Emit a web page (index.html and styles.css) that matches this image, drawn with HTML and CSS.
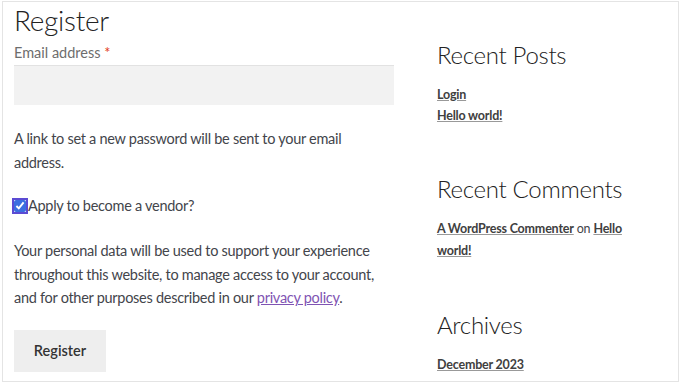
FILE: index.html
```html
<html>
<head>
    <title>Register</title>
    <meta http-equiv="Content-Type" content="text/html; charset=utf-8"/>
    <meta name="viewport" content="width=device-width, initial-scale=1">
    <link rel="stylesheet" href="styles.css">
</head>
<body>
<div class="page">
    <div class="main">
        <h2 class="title">Register</h2>
        <form class="register-form" onsubmit="return false">
            <label class="field-label" for="reg_email">Email address <span class="required">*</span></label>
            <input id="reg_email" class="text-input" type="email">

            <p class="note">A link to set a new password will be sent to your email address.</p>

            <label class="vendor" for="apply_vendor">
                <input id="apply_vendor" type="checkbox" checked>Apply to become a vendor?
            </label>

            <p class="note privacy">Your personal data will be used to support your experience throughout this website, to manage access to your account, and for other purposes described in our <a href="#">privacy policy</a>.</p>

            <button class="button" type="submit">Register</button>
        </form>
    </div>

    <aside class="sidebar">
        <section class="widget">
            <h2 class="widget-title">Recent Posts</h2>
            <ul class="widget-list">
                <li><a href="#">Login</a></li>
                <li><a href="#">Hello world!</a></li>
            </ul>
        </section>
        <section class="widget">
            <h2 class="widget-title">Recent Comments</h2>
            <ul class="widget-list comments">
                <li><a href="#">A WordPress Commenter</a> on <a href="#">Hello world!</a></li>
            </ul>
        </section>
        <section class="widget">
            <h2 class="widget-title">Archives</h2>
            <ul class="widget-list">
                <li><a href="#">December 2023</a></li>
            </ul>
        </section>
    </aside>
</div>
</body>
</html>
```

FILE: styles.css
```css
html {
    font-family: 'Lato', 'Noto Sans', Arial, sans-serif;
    margin: 0;
}

body {
    margin: 0;
    background: white;
}

.page {
    display: flex;
    gap: 43px;
    margin: 1px 1px 2px 2px;
    height: 381px;
    box-sizing: border-box;
    border: 1px solid #e4e4e4;
    padding: 0 11px;
    overflow: hidden;
}

.main {
    width: 380px;
    flex-shrink: 0;
}

.title {
    font-weight: 300;
    font-size: 28px;
    letter-spacing: -0.3px;
    color: #222;
    margin: 1px 0 6px;
    line-height: 34px;
}

.field-label {
    display: block;
    font-size: 14.5px;
    color: #6d6d6d;
    line-height: 20px;
    margin-bottom: 2px;
}

.required {
    color: #e2401c;
}

.text-input {
    display: block;
    width: 100%;
    height: 40px;
    border: 0;
    border-top: 1px solid #e2e2e2;
    background: #f2f2f2;
    box-sizing: border-box;
}

.note {
    font-size: 14.5px;
    letter-spacing: -0.28px;
    line-height: 23.5px;
    color: #43454b;
    margin: 22px 0 0;
}

.note a {
    color: #7f54b3;
}

.vendor {
    display: flex;
    align-items: center;
    font-size: 14.5px;
    letter-spacing: -0.28px;
    color: #43454b;
    margin-top: 22px;
    line-height: 20px;
}

.vendor input {
    width: 12px;
    height: 12px;
    margin: 0 2px 0 0;
    outline: 2px solid #5b4bd3;
    outline-offset: 0;
    accent-color: #3b6fe0;
}

.note.privacy {
    margin-top: 23px;
}

.button {
    display: block;
    margin-top: 20px;
    width: 92px;
    height: 42px;
    border: 0;
    background: #eeeeee;
    font-family: inherit;
    font-size: 14.5px;
    font-weight: 600;
    color: #333;
}

.sidebar {
    width: 195px;
    padding-top: 37px;
}

.widget {
    margin-bottom: 47px;
}

.widget-title {
    font-weight: 300;
    font-size: 24px;
    letter-spacing: -0.3px;
    line-height: 32px;
    color: #222;
    margin: 0 0 13px;
    white-space: nowrap;
}

.widget-list {
    list-style: none;
    margin: 0;
    padding: 0;
    font-size: 12.5px;
    letter-spacing: -0.2px;
    line-height: 21px;
    color: #43454b;
}

.widget-list.comments {
    line-height: 22px;
}

.widget-list a {
    color: #404040;
    font-weight: 700;
    text-decoration: underline;
    text-decoration-color: #999;
}
```
